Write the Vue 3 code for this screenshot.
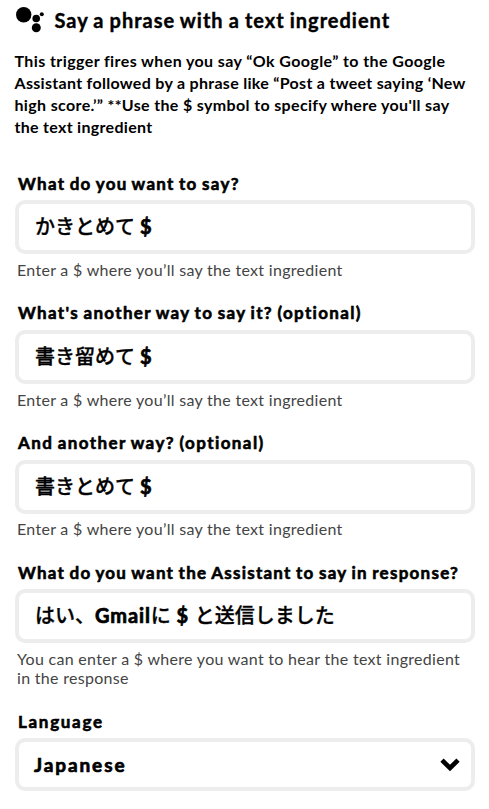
<script setup>
const intro = [
  { text: 'This trigger fires when you say “Ok Google” to the Google', cls: 'i1' },
  { text: 'Assistant followed by a phrase like “Post a tweet saying ‘New', cls: 'i2' },
  { text: 'high score.’” **Use the $ symbol to specify where you\'ll say', cls: 'i3' },
  { text: 'the text ingredient', cls: 'i4' },
]
const hint = 'Enter a $ where you’ll say the text ingredient'
const fields = [
  { label: 'What do you want to say?', value: [{ ja: 'かきとめて' }, { en: ' $' }], hints: [hint], cls: 'f1' },
  { label: "What's another way to say it? (optional)", value: [{ ja: '書き留めて' }, { en: ' $' }], hints: [hint], cls: 'f2' },
  { label: 'And another way? (optional)', value: [{ ja: '書きとめて' }, { en: ' $' }], hints: [hint], cls: 'f3' },
  {
    label: 'What do you want the Assistant to say in response?',
    value: [{ ja: 'はい、' }, { en: 'Gmail' }, { ja: 'に' }, { en: ' $ ' }, { ja: 'と送信しました' }],
    hints: ['You can enter a $ where you want to hear the text ingredient', 'in the response'],
    cls: 'f4',
  },
]
</script>

<template>
  <main class="page">
    <header class="head">
      <svg class="logo" width="30" height="28" viewBox="0 0 30 28">
        <circle cx="8.7" cy="8.8" r="7.7" />
        <circle cx="21.2" cy="12.5" r="3.8" />
        <circle cx="26.8" cy="8.2" r="2" />
        <circle cx="21.3" cy="21.8" r="4.5" />
      </svg>
      <h1 class="title">Say a phrase with a text ingredient</h1>
    </header>
    <p class="intro">
      <span v-for="l in intro" :key="l.cls" class="line" :class="l.cls">{{ l.text }}</span>
    </p>
    <section v-for="f in fields" :key="f.cls" class="field" :class="f.cls">
      <label class="label">{{ f.label }}</label>
      <div class="box">
        <span class="value"><span v-for="(p, i) in f.value" :key="i" :class="p.ja ? 'ja' : 'en'">{{ p.ja || p.en }}</span></span>
      </div>
      <p class="hint"><span v-for="h in f.hints" :key="h" class="line">{{ h }}</span></p>
    </section>
    <section class="field lang">
      <label class="label">Language</label>
      <div class="box select">
        <span class="value language">Japanese</span>
        <svg class="chevron" width="20" height="14" viewBox="0 0 20 14">
          <path d="M2 2.2 L10 10 L18 2.2" fill="none" stroke="#000" stroke-width="4.6" />
        </svg>
      </div>
    </section>
  </main>
</template>

<style>
body {
  background: #fff;
}
</style>

<style scoped>
.page {
  box-sizing: border-box;
  width: 489px;
  height: 809px;
  padding: 0 14px 0 15px;
  overflow: hidden;
  color: #000;
  font-family: Lato, "Noto Sans CJK JP", sans-serif;
}
.head {
  display: flex;
  align-items: flex-start;
  height: 50px;
}
.logo {
  margin-top: 6px;
  flex: none;
}
.title {
  margin: 6px 0 0 9.5px;
  font-size: 20px;
  line-height: 28px;
  font-weight: 700;
  letter-spacing: 1px;
  word-spacing: -0.8px;
  white-space: nowrap;
  -webkit-text-stroke: 0.4px #000;
}
.intro {
  margin: 0 0 33.7px 0;
  height: 88px;
  font-size: 16px;
  line-height: 22px;
  font-weight: 700;
  letter-spacing: 0.3px;
}
.i1 {
  letter-spacing: 0.4px;
}
.i3 {
  letter-spacing: 0.35px;
}
.line {
  display: block;
  width: max-content;
  margin-left: -0.5px;
  white-space: nowrap;
}
.label {
  display: block;
  width: max-content;
  margin: 0 0 4.6px 3px;
  font-size: 17px;
  line-height: 24px;
  font-weight: 700;
  letter-spacing: 1.28px;
  word-spacing: -1px;
  white-space: nowrap;
  -webkit-text-stroke: 0.6px #000;
}
.f2 .label {
  letter-spacing: 1.33px;
}
.f3 .label {
  letter-spacing: 1.41px;
}
.f4 .label {
  letter-spacing: 1.25px;
}
.lang .label {
  letter-spacing: 1.7px;
}
.box {
  box-sizing: border-box;
  display: flex;
  align-items: center;
  width: 460px;
  height: 54px;
  padding: 0 11px 2px 16px;
  border: 4px solid #ededed;
  border-radius: 10px;
}
.value {
  font-size: 20px;
  line-height: 30px;
  font-weight: 700;
  white-space: pre;
}
.en {
  letter-spacing: 0.9px;
  -webkit-text-stroke: 0.7px #000;
}
.f1 .en,
.f2 .en,
.f3 .en {
  letter-spacing: 0.2px;
}
.ja {
  font-weight: 500;
  -webkit-text-stroke: 0.3px #000;
}
.language {
  font-size: 19px;
  letter-spacing: 1.9px;
  -webkit-text-stroke: 0.7px #000;
}
.hint {
  margin: 5.8px 0 22.1px 2.5px;
  font-size: 16px;
  line-height: 19.2px;
  letter-spacing: 0.3px;
  color: #444;
}
.select {
  height: 53px;
  padding-left: 15px;
  padding-bottom: 0;
  justify-content: space-between;
}
</style>
